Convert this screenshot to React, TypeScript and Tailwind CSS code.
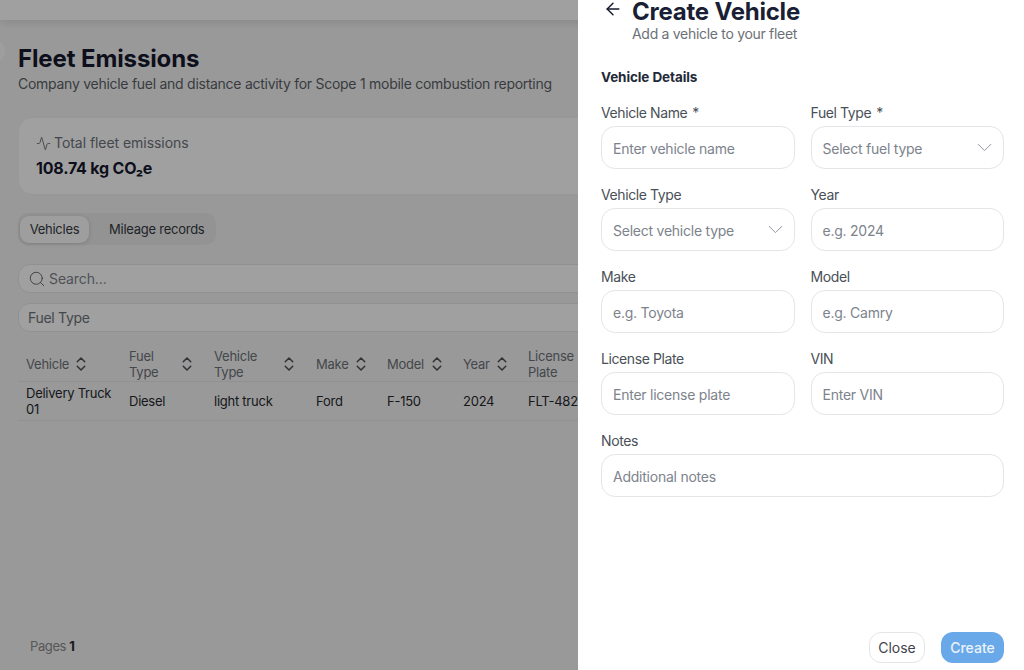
import {Activity, ArrowLeft, ChevronDown, ChevronsUpDown, Search} from 'lucide-react';

const COLUMNS = [
  {label: 'Vehicle', width: 'w-[103px]', labelWidth: 'w-[43px]'},
  {label: 'Fuel Type', width: 'w-[85px]', labelWidth: 'w-[46px]'},
  {label: 'Vehicle Type', width: 'w-[102px]', labelWidth: 'w-[63px]'},
  {label: 'Make', width: 'w-[71px]', labelWidth: 'w-[33px]'},
  {label: 'Model', width: 'w-[76px]', labelWidth: 'w-[38px]'},
  {label: 'Year', width: 'w-[65px]', labelWidth: 'w-[27px]'},
  {label: 'License Plate', width: 'w-[110px]', labelWidth: 'w-[50px]'}
];

const ROW = ['Delivery Truck 01', 'Diesel', 'light truck', 'Ford', 'F-150', '2024', 'FLT-4821'];

const TextField = ({label, placeholder, required}: {label: string; placeholder: string; required?: boolean}) => (
  <div className="flex flex-col">
    <label className="h-[22px] text-[14px] leading-[17px] tracking-[-0.4px] text-[#495057]">
      {label}
      {required && <span className="ml-[5px]">*</span>}
    </label>
    <div className="flex h-[43px] items-center rounded-[14px] border border-[#e3e5e8] bg-white px-[11px] pt-[1px] text-[14px] tracking-[-0.24px] text-[#7d838c]">
      {placeholder}
    </div>
  </div>
);

const SelectField = ({label, placeholder, required}: {label: string; placeholder: string; required?: boolean}) => (
  <div className="flex flex-col">
    <label className="h-[22px] text-[14px] leading-[17px] tracking-[-0.4px] text-[#495057]">
      {label}
      {required && <span className="ml-[5px]">*</span>}
    </label>
    <div className="flex h-[43px] items-center justify-between rounded-[14px] border border-[#e3e5e8] bg-white pl-[11px] pr-[6px] text-[14px] tracking-[-0.24px] text-[#7d838c]">
      <span className="pt-[1px]">{placeholder}</span>
      <ChevronDown size={25} strokeWidth={0.9} className="text-[#8b9097]" />
    </div>
  </div>
);

const FleetPage = () => (
  <div className="relative flex h-[670px] w-[1024px] flex-col overflow-hidden bg-[#f3f3f3]">
    <div className="h-[20px] shrink-0 bg-[#fefefe] shadow-[0_2px_10px_rgba(0,0,0,0.12)]" />
    {/* sidebar toggle peeking in from the left edge */}
    <div className="absolute -left-[17px] top-[40px] h-[22px] w-[22px] rounded-full bg-[#fbfbfb]" />
    <div className="px-[18px] pt-[23px]">
      <h1 className="text-[24px] font-bold leading-[32px] tracking-[-0.12px] text-[#17192e]">Fleet Emissions</h1>
      <p className="text-[14px] leading-[18px] tracking-[-0.27px] text-[#5a5f66]">
        Company vehicle fuel and distance activity for Scope 1 mobile combustion reporting
      </p>

      <div className="mt-[24px] h-[78px] rounded-[14px] border border-[#f0f0f0] bg-[#fefefe] px-[17px] pt-[15px]">
        <div className="flex items-center gap-[3px] text-[14px] leading-[20px] tracking-[-0.05px] text-[#6c7178]">
          <Activity size={15} strokeWidth={1.5} />
          Total fleet emissions
        </div>
        <div className="mt-[5px] text-[16px] font-bold leading-[20px] tracking-[-0.2px] text-[#17192e]">108.74 kg CO₂e</div>
      </div>

      <div className="mt-[18px] flex h-[32px] w-[198px] items-center rounded-[10px] bg-[#e9e9e9] pl-[2px] text-[13px] tracking-[-0.25px] text-[#343a40]">
        <div className="flex h-[27px] w-[69px] items-center justify-center rounded-[9px] bg-[#fbfbfb] pt-[1px] shadow-[0_1px_4px_rgba(0,0,0,0.15)]">
          Vehicles
        </div>
        <div className="ml-[20px] whitespace-nowrap pt-[1px]">Mileage records</div>
      </div>

      <div className="mt-[19px] flex h-[29px] items-center gap-[3px] rounded-[12px] border border-[#e6e6e6] bg-[#fefefe] pl-[9px] text-[14px] tracking-[-0.1px] text-[#7d838c]">
        <Search size={18} strokeWidth={1.25} className="text-[#5f6368]" />
        Search...
      </div>
      <div className="mt-[10px] flex h-[29px] items-center rounded-[12px] border border-[#e6e6e6] bg-[#fefefe] pl-[9px] text-[14px] tracking-[-0.3px] text-[#6c7178]">
        Fuel Type
      </div>

      <table className="mt-[16px] table-fixed border-collapse text-[13px] tracking-[-0.25px]">
        <thead>
          <tr className="h-[33px] border-b border-[#e6e6e6]">
            {COLUMNS.map((col) => (
              <th key={col.label} className={`${col.width} p-0 pl-[8px] text-left font-normal leading-[16px] text-[#6c7178]`}>
                <div className="flex items-center gap-[3px]">
                  <span className={col.labelWidth}>{col.label}</span>
                  <ChevronsUpDown size={18} strokeWidth={2} className="shrink-0 text-[#4a4f55]" />
                </div>
              </th>
            ))}
          </tr>
        </thead>
        <tbody>
          <tr className="h-[39px] border-b border-[#e6e6e6]">
            {ROW.map((cell) => (
              <td key={cell} className="p-0 pl-[8px] leading-[16px] text-[#26292e]">
                {cell}
              </td>
            ))}
          </tr>
        </tbody>
      </table>
    </div>

    <div className="mb-[15px] mt-auto pl-[30px] text-[13px] leading-[18px] tracking-[-0.4px] text-[#8a8a8a]">
      Pages <span className="font-bold text-[#26292e]">1</span>
    </div>
  </div>
);

export default function App() {
  return (
    <div className="relative h-[670px] w-[1024px] overflow-hidden font-['Inter',sans-serif]">
      <FleetPage />

      {/* dimmed backdrop */}
      <div className="absolute inset-0 bg-black/[0.37]" />

      {/* drawer */}
      <aside className="absolute bottom-0 right-0 top-0 flex w-[446px] flex-col bg-white pl-[23px] pr-[20px]">
        <div className="-mt-[4px] flex">
          <ArrowLeft size={20} strokeWidth={1.75} className="ml-[2px] mt-[3px] text-[#17192e]" />
          <div className="ml-[9px]">
            <h2 className="text-[24px] font-bold leading-[32px] tracking-[-0.22px] text-[#1a1f36]">Create Vehicle</h2>
            <p className="-mt-[3px] text-[14px] leading-[18px] tracking-[-0.3px] text-[#6c7178]">Add a vehicle to your fleet</p>
          </div>
        </div>

        <h3 className="mt-[24px] text-[13.5px] font-bold leading-[20px] tracking-[-0.1px] text-[#1f2937]">Vehicle Details</h3>

        <div className="mt-[17px] grid grid-cols-2 gap-x-[16px] gap-y-[17px]">
          <TextField label="Vehicle Name" placeholder="Enter vehicle name" required />
          <SelectField label="Fuel Type" placeholder="Select fuel type" required />
          <SelectField label="Vehicle Type" placeholder="Select vehicle type" />
          <TextField label="Year" placeholder="e.g. 2024" />
          <TextField label="Make" placeholder="e.g. Toyota" />
          <TextField label="Model" placeholder="e.g. Camry" />
          <TextField label="License Plate" placeholder="Enter license plate" />
          <TextField label="VIN" placeholder="Enter VIN" />
          <div className="col-span-2">
            <TextField label="Notes" placeholder="Additional notes" />
          </div>
        </div>

        <div className="mb-[7px] mt-auto flex justify-end gap-[16px]">
          <button className="h-[31px] w-[56px] rounded-[12px] border border-[#e3e5e8] bg-white text-[14px] text-[#3f444b]">
            Close
          </button>
          <button className="h-[31px] w-[63px] rounded-[12px] bg-[#6aa9e9] text-[14px] font-medium text-[#eaf3fc]">
            Create
          </button>
        </div>
      </aside>
    </div>
  );
}
